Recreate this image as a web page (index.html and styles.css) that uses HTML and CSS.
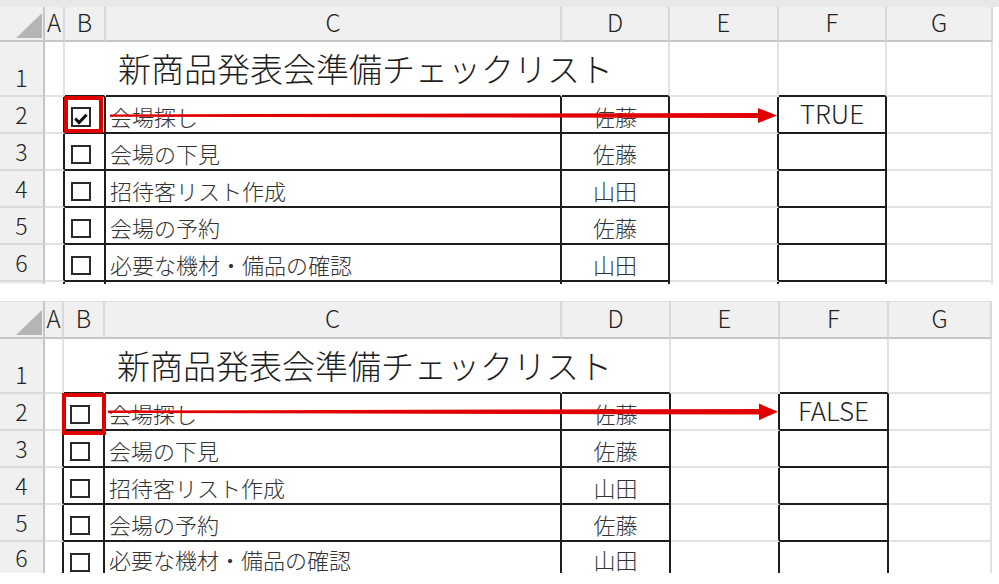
FILE: index.html
```html
<!DOCTYPE html>
<html lang="ja">
<head>
<meta charset="utf-8">
<title>新商品発表会準備チェックリスト</title>
<link rel="stylesheet" href="styles.css">
</head>
<body>
<div class="band"></div>

<section class="sheet s1">
  <div class="grid">
    <div class="corner"><svg width="26" height="25" viewBox="0 0 26 25"><polygon points="26,0 26,25 0,25" fill="#b5b5b5"/></svg></div>
    <div class="ch">A</div><div class="ch">B</div><div class="ch">C</div><div class="ch">D</div><div class="ch">E</div><div class="ch">F</div><div class="ch">G</div>

    <div class="rh rh1">1</div><div class="c"></div><div class="c bb wr"></div><div class="c bb wr title">新商品発表会準備チェックリスト</div><div class="c bb"></div><div class="c"></div><div class="c bb"></div><div class="c"></div>

    <div class="rh">2</div><div class="c br"></div><div class="c br bb bcell"><span class="cbx on"><svg width="16" height="16" viewBox="0 0 16 16"><path d="M2.3 9.6 L6 13.6 L13.6 5.8" fill="none" stroke="#111" stroke-width="3"/></svg></span></div><div class="c br bb item">会場探し</div><div class="c br bb name">佐藤</div><div class="c br"></div><div class="c br bb tf">TRUE</div><div class="c"></div>

    <div class="rh">3</div><div class="c br"></div><div class="c br bb bcell"><span class="cbx"></span></div><div class="c br bb item">会場の下見</div><div class="c br bb name">佐藤</div><div class="c br"></div><div class="c br bb tf"></div><div class="c"></div>

    <div class="rh">4</div><div class="c br"></div><div class="c br bb bcell"><span class="cbx"></span></div><div class="c br bb item">招待客リスト作成</div><div class="c br bb name">山田</div><div class="c br"></div><div class="c br bb tf"></div><div class="c"></div>

    <div class="rh">5</div><div class="c br"></div><div class="c br bb bcell"><span class="cbx"></span></div><div class="c br bb item">会場の予約</div><div class="c br bb name">佐藤</div><div class="c br"></div><div class="c br bb tf"></div><div class="c"></div>

    <div class="rh">6</div><div class="c br"></div><div class="c br bb bcell"><span class="cbx"></span></div><div class="c br bb item">必要な機材・備品の確認</div><div class="c br bb name">山田</div><div class="c br"></div><div class="c br bb tf"></div><div class="c"></div>

    <div class="rh nb"></div><div class="c br nb"></div><div class="c br nb"></div><div class="c br nb"></div><div class="c br nb"></div><div class="c br nb"></div><div class="c br nb"></div><div class="c nb"></div>
  </div>
  <div class="hl hl1"></div>
  <svg class="arrow" width="999" height="130" viewBox="0 0 999 130">
    <polygon points="110,107.4 762,105.9 762,111.1 110,109.8" fill="#e10000"/>
    <polygon points="758,101 777,108.6 758,116" fill="#e10000"/>
  </svg>
</section>

<div class="gap"></div>

<section class="sheet s2">
  <div class="grid">
    <div class="corner"><svg width="26" height="25" viewBox="0 0 26 25"><polygon points="26,0 26,25 0,25" fill="#b5b5b5"/></svg></div>
    <div class="ch">A</div><div class="ch">B</div><div class="ch">C</div><div class="ch">D</div><div class="ch">E</div><div class="ch">F</div><div class="ch">G</div>

    <div class="rh rh1">1</div><div class="c"></div><div class="c bb wr"></div><div class="c bb wr title">新商品発表会準備チェックリスト</div><div class="c bb"></div><div class="c"></div><div class="c bb"></div><div class="c"></div>

    <div class="rh">2</div><div class="c br"></div><div class="c br bb bcell"><span class="cbx"></span></div><div class="c br bb item">会場探し</div><div class="c br bb name">佐藤</div><div class="c br"></div><div class="c br bb tf">FALSE</div><div class="c"></div>

    <div class="rh">3</div><div class="c br"></div><div class="c br bb bcell"><span class="cbx"></span></div><div class="c br bb item">会場の下見</div><div class="c br bb name">佐藤</div><div class="c br"></div><div class="c br bb tf"></div><div class="c"></div>

    <div class="rh">4</div><div class="c br"></div><div class="c br bb bcell"><span class="cbx"></span></div><div class="c br bb item">招待客リスト作成</div><div class="c br bb name">山田</div><div class="c br"></div><div class="c br bb tf"></div><div class="c"></div>

    <div class="rh">5</div><div class="c br"></div><div class="c br bb bcell"><span class="cbx"></span></div><div class="c br bb item">会場の予約</div><div class="c br bb name">佐藤</div><div class="c br"></div><div class="c br bb tf"></div><div class="c"></div>

    <div class="rh nb">6</div><div class="c br nb"></div><div class="c br nb bcell"><span class="cbx"></span></div><div class="c br nb item">必要な機材・備品の確認</div><div class="c br nb name">山田</div><div class="c br nb"></div><div class="c br nb tf"></div><div class="c nb"></div>
  </div>
  <div class="hl hl2"></div>
  <svg class="arrow" width="999" height="130" viewBox="0 0 999 130">
    <polygon points="108,109.6 763,107.9 763,113.6 108,112" fill="#e10000"/>
    <polygon points="759,102.6 778,110.8 759,119.2" fill="#e10000"/>
  </svg>
</section>
</body>
</html>
```
FILE: styles.css
```css
* { box-sizing: border-box; }

html, body {
  margin: 0;
  background: #fff;
}

body {
  width: 999px;
  height: 584px;
  overflow: hidden;
  font-family: "Noto Sans CJK JP", "Noto Sans", sans-serif;
  font-weight: 300;
  color: #222;
}

.band {
  height: 7px;
  background: #e8e8e8;
}

.gap {
  height: 17px;
}

.sheet {
  position: relative;
}

.grid {
  display: grid;
}

.s1 .grid {
  grid-template-columns: 45px 20px 41px 456px 108px 109px 108px 106px;
  grid-template-rows: 35px 55px repeat(5, 37px) 2px;
}

.s2 .grid {
  grid-template-columns: 45px 19px 41px 457px 109px 109px 109px 103px;
  grid-template-rows: 38px 55px repeat(4, 37px) 31px;
}

/* header row */
.corner {
  background: #f0f0f0;
  border-right: 2px solid #c6c6c6;
  border-bottom: 2px solid #c6c6c6;
  display: flex;
  align-items: flex-end;
  justify-content: flex-end;
  padding: 0 1px 2px 0;
}

.ch {
  background: #f0f0f0;
  border-right: 2px solid #d8d8d8;
  border-bottom: 2px solid #c6c6c6;
  display: flex;
  align-items: center;
  justify-content: center;
  font-size: 24px;
  line-height: 1;
  padding-bottom: 3px;
  color: #222;
}

.s2 .ch,
.s2 .corner {
  border-top: 1px solid #e0e0e0;
}

/* row headers */
.rh {
  background: #f0f0f0;
  border-right: 2px solid #c6c6c6;
  border-bottom: 2px solid #dadada;
  display: flex;
  align-items: center;
  justify-content: center;
  font-size: 23px;
  line-height: 1;
  color: #222;
}

.rh1 {
  align-items: flex-end;
  padding-bottom: 6px;
}

/* cells */
.c {
  border-right: 2px solid #e2e2e2;
  border-bottom: 2px solid #e2e2e2;
  display: flex;
  align-items: center;
  min-width: 0;
  white-space: nowrap;
  font-size: 22px;
  line-height: 1;
  color: #333;
}

.bb { border-bottom-color: #1e1e1e; }
.br { border-right-color: #1e1e1e; }
.wr { border-right-color: #fff; }
.nb { border-bottom: 0; }

.title {
  align-items: flex-end;
  padding: 0 0 10px 12px;
  font-size: 33px;
  color: #1e1e1e;
  overflow: visible;
}

.item {
  padding: 3px 0 0 4px;
}

.name {
  justify-content: center;
  padding-top: 3px;
}

.tf {
  justify-content: center;
  font-size: 26px;
  padding-bottom: 4px;
  color: #222;
}

.bcell {
  align-items: flex-start;
  padding: 11px 0 0 6px;
}

.cbx {
  display: block;
  width: 20px;
  height: 19px;
  border: 2px solid #2a2a2a;
  background: #fff;
}

.cbx.on {
  height: 20px;
  margin-top: -1px;
}

.cbx svg {
  display: block;
}

/* overlays */
.hl {
  position: absolute;
  border: 4px solid #e10000;
}

.hl1 {
  left: 64px;
  top: 89px;
  width: 39px;
  height: 37px;
}

.hl2 {
  left: 62px;
  top: 92px;
  width: 44px;
  height: 42px;
}

.arrow {
  position: absolute;
  left: 0;
  top: 0;
  pointer-events: none;
}
```
